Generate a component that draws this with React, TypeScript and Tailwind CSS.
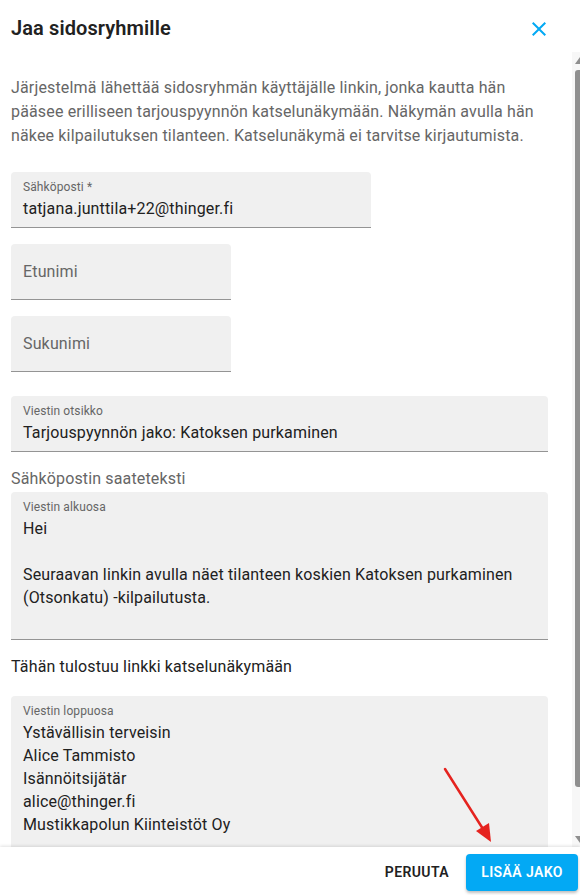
import React from "react";

function Field({
  label,
  lines,
  width,
  filled = true,
  extraBottom = 0,
}: {
  label: string;
  lines?: string[];
  width: string;
  filled?: boolean;
  extraBottom?: number;
}) {
  if (!filled) {
    return (
      <div
        className={`${width} h-[56px] flex items-center px-[12px] bg-[#f0f0f0] rounded-t-[4px] border-b border-[#949494] text-[16px] leading-[23px] text-[#666666] tracking-[0.15px]`}
      >
        {label}
      </div>
    );
  }
  return (
    <div
      className={`${width} flex flex-col pt-[6px] pb-[7px] px-[12px] bg-[#f0f0f0] rounded-t-[4px] border-b border-[#949494]`}
    >
      <div className="text-[12px] leading-[18px] text-[#666666] tracking-[0.1px]">{label}</div>
      <div className="mt-[1px] text-[16px] leading-[23px] text-[#212121] tracking-[0.15px]">
        {lines!.map((l, i) => (
          <div key={i} className="h-[23px] whitespace-nowrap">
            {l}
          </div>
        ))}
      </div>
      {extraBottom > 0 && <div style={{ height: extraBottom }} />}
    </div>
  );
}

export default function App() {
  return (
    <div className="relative w-[580px] h-[895px] overflow-hidden bg-white font-[Roboto,sans-serif]">
      {/* Header */}
      <div className="h-[52px] flex items-start justify-between pl-[11px] pt-[16px]">
        <div className="text-[20px] leading-[24px] font-semibold text-[#212121] tracking-[0.1px]">
          Jaa sidosryhmille
        </div>
        <svg
          className="absolute left-[527px] top-[17px]"
          width="24"
          height="24"
          viewBox="0 0 24 24"
          fill="#03a9f4"
        >
          <path d="M19 6.41 17.59 5 12 10.59 6.41 5 5 6.41 10.59 12 5 17.59 6.41 19 12 13.41 17.59 19 19 17.59 13.41 12z" />
        </svg>
      </div>

      {/* Body */}
      <div className="relative h-[795px] overflow-hidden pl-[11px] pt-[24px]">
        <div className="text-[16px] leading-[24px] text-[#666666] tracking-[0.15px]">
          <div className="whitespace-nowrap">Järjestelmä lähettää sidosryhmän käyttäjälle linkin, jonka kautta hän</div>
          <div className="whitespace-nowrap">pääsee erilliseen tarjouspyynnön katselunäkymään. Näkymän avulla hän</div>
          <div className="whitespace-nowrap">näkee kilpailutuksen tilanteen. Katselunäkymä ei tarvitse kirjautumista.</div>
        </div>

        <div className="mt-[24px] flex flex-col">
          <Field label="Sähköposti *" lines={["tatjana.junttila+22@thinger.fi"]} width="w-[360px]" />
          <div className="mt-[16px]">
            <Field label="Etunimi" width="w-[220px]" filled={false} />
          </div>
          <div className="mt-[16px]">
            <Field label="Sukunimi" width="w-[220px]" filled={false} />
          </div>
          <div className="mt-[24px]">
            <Field
              label="Viestin otsikko"
              lines={["Tarjouspyynnön jako: Katoksen purkaminen"]}
              width="w-[537px]"
            />
          </div>
          <div className="mt-[15px] text-[16px] leading-[24px] text-[#666666] tracking-[0.15px]">
            Sähköpostin saateteksti
          </div>
          <div className="mt-[1px]">
            <Field
              label="Viestin alkuosa"
              lines={[
                "Hei",
                "",
                "Seuraavan linkin avulla näet tilanteen koskien Katoksen purkaminen",
                "(Otsonkatu) -kilpailutusta.",
                "",
              ]}
              width="w-[537px]"
            />
          </div>
          <div className="mt-[15px] text-[16px] leading-[24px] text-[#212121] tracking-[0.15px]">
            Tähän tulostuu linkki katselunäkymään
          </div>
          <div className="mt-[17px]">
            <Field
              label="Viestin loppuosa"
              lines={[
                "Ystävällisin terveisin",
                "Alice Tammisto",
                "Isännöitsijätär",
                "alice@thinger.fi",
                "Mustikkapolun Kiinteistöt Oy",
                "",
                "",
              ]}
              width="w-[537px]"
            />
          </div>
        </div>

        {/* Scrollbar */}
        <div className="absolute right-0 top-0 bottom-0 w-[8px] bg-[#f7f7f7]">
          <svg className="absolute left-[3px] top-[5px]" width="6" height="7" viewBox="0 0 6 7">
            <polygon points="5,0 5,7 0,7" fill="#8f8f8f" />
          </svg>
          <div className="absolute left-[3px] top-[18px] w-[5px] h-[717px] bg-[#8f8f8f] rounded-tl-[3px] rounded-bl-[3px]" />
          <svg className="absolute left-[3px] top-[784px]" width="6" height="7" viewBox="0 0 6 7">
            <polygon points="0,0 5,0 5,7" fill="#8f8f8f" />
          </svg>
        </div>
      </div>

      {/* Footer */}
      <div className="relative h-[48px] bg-white shadow-[0_-1px_3px_rgba(0,0,0,0.12)] flex items-start justify-end pt-[7px] pr-[2px]">
        <div className="h-[37px] px-[8px] flex items-center text-[14px] font-semibold tracking-[0.4px] text-[#212121]">
          PERUUTA
        </div>
        <div className="ml-[9px] h-[37px] w-[112px] flex items-center justify-center rounded-[4px] bg-[#03a9f4] text-white text-[14px] font-semibold tracking-[0.4px] shadow-[0_2px_3px_rgba(0,0,0,0.25)]">
          LISÄÄ JAKO
        </div>
      </div>

      {/* Red arrow annotation */}
      <svg className="absolute left-0 top-0 pointer-events-none" width="580" height="895">
        <line x1="445" y1="769" x2="483" y2="829" stroke="#e5231f" strokeWidth="2.5" strokeLinecap="round" />
        <polygon points="491,842 476,831 489,823" fill="#e5231f" />
      </svg>
    </div>
  );
}
